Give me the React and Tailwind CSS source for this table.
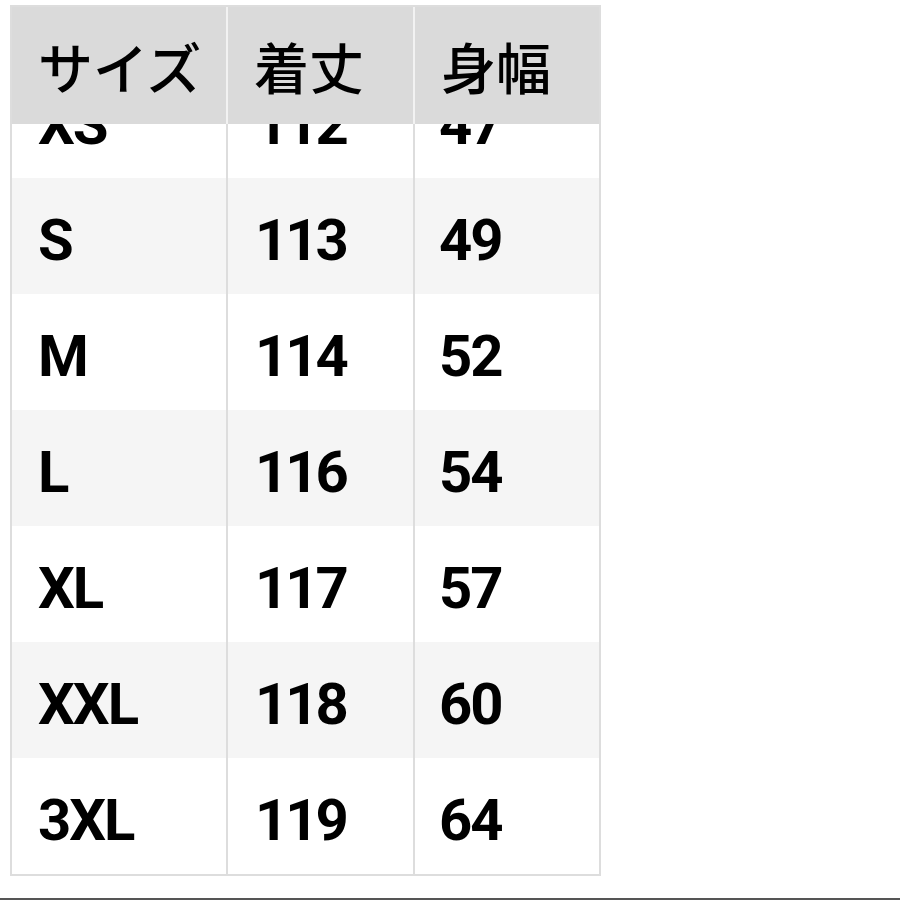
import React from "react";

const rows = [
  ["XS", "112", "47"],
  ["S", "113", "49"],
  ["M", "114", "52"],
  ["L", "116", "54"],
  ["XL", "117", "57"],
  ["XXL", "118", "60"],
  ["3XL", "119", "64"],
];

export default function App() {
  return (
    <div className="w-[900px] h-[900px] bg-white flex flex-col overflow-hidden">
      <div className="pt-[5px] pl-[10px]">
        <div className="w-[591px] border-2 border-[#dddddd] flex flex-col">
          <div
            className="grid grid-cols-[216px_187px_184px] h-[117px] bg-[#dadada] text-black relative z-10"
            style={{ fontFamily: '"Noto Sans CJK JP", "Noto Sans", sans-serif' }}
          >
            <div className="border-r-2 border-[#f2f2f2] flex items-center pl-[26px] text-[55px] font-medium leading-none">サイズ</div>
            <div className="border-r-2 border-[#f2f2f2] flex items-center pl-[26px] text-[55px] font-medium leading-none">着丈</div>
            <div className="flex items-center pl-[26px] text-[55px] font-medium leading-none">身幅</div>
          </div>
          <div className="h-[750px] overflow-hidden flex flex-col">
            {rows.map((r, i) => (
              <div
                key={r[0]}
                className={
                  "grid grid-cols-[216px_187px_184px] h-[116px] shrink-0 " +
                  (i % 2 === 0 ? "bg-white" : "bg-[#f5f5f5]") +
                  (i === 0 ? " -mt-[62px]" : "")
                }
                style={{ fontFamily: 'Roboto, "Liberation Sans", sans-serif' }}
              >
                <div className="border-r-2 border-[#dddddd] flex items-center pl-[26px] pt-2 text-[58px] font-bold leading-none tracking-[-2px] text-black">{r[0]}</div>
                <div className="border-r-2 border-[#dddddd] flex items-center pl-[27px] pt-2 text-[58px] font-bold leading-none tracking-[-3px] text-black">{r[1]}</div>
                <div className="flex items-center pl-6 pt-2 text-[58px] font-bold leading-none tracking-[-2px] text-black">{r[2]}</div>
              </div>
            ))}
          </div>
        </div>
      </div>
      <div className="mt-auto h-[2px] w-full bg-[#555555]" />
    </div>
  );
}
